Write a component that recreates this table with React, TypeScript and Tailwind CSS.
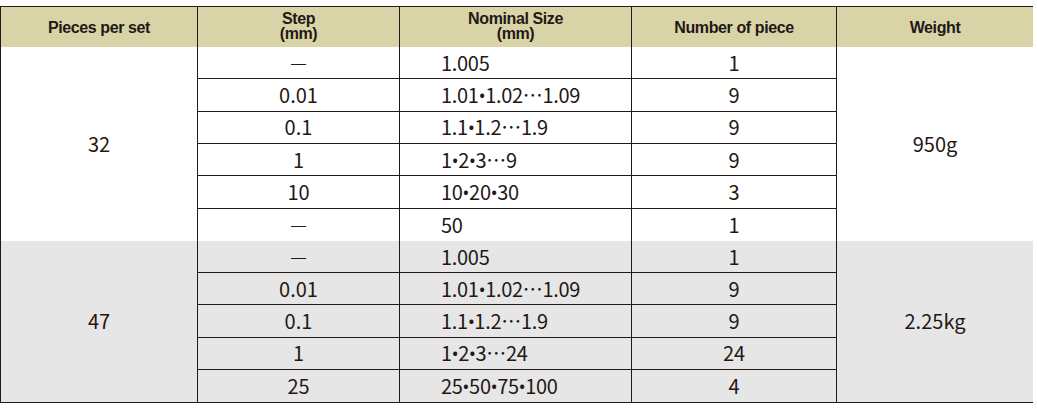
import React from 'react';

type Row = { step: string; size: string; count: string };

const groups: { pieces: string; weight: string; bg: string; span: string; rows: Row[] }[] = [
  {
    pieces: '32',
    weight: '950g',
    bg: 'bg-white',
    span: 'row-span-6',
    rows: [
      { step: '—', size: '1.005', count: '1' },
      { step: '0.01', size: '1.01•1.02…1.09', count: '9' },
      { step: '0.1', size: '1.1•1.2…1.9', count: '9' },
      { step: '1', size: '1•2•3…9', count: '9' },
      { step: '10', size: '10•20•30', count: '3' },
      { step: '—', size: '50', count: '1' },
    ],
  },
  {
    pieces: '47',
    weight: '2.25kg',
    bg: 'bg-[#e6e6e6]',
    span: 'row-span-5',
    rows: [
      { step: '—', size: '1.005', count: '1' },
      { step: '0.01', size: '1.01•1.02…1.09', count: '9' },
      { step: '0.1', size: '1.1•1.2…1.9', count: '9' },
      { step: '1', size: '1•2•3…24', count: '24' },
      { step: '25', size: '25•50•75•100', count: '4' },
    ],
  },
];

const headCell =
  "flex items-center justify-center text-center bg-[#d9d4a7] font-['Liberation_Sans',Arial,sans-serif] font-bold text-[16px] leading-[15px] tracking-[-0.4px]";

// bullets drawn narrow with Noto Sans, the rest in the CJK gothic
function Size({ text }: { text: string }) {
  const parts = text.split('•');
  return (
    <>
      {parts.map((p, i) => (
        <React.Fragment key={i}>
          {i > 0 && <span className="font-['Noto_Sans',sans-serif] text-[18px]">•</span>}
          {p}
        </React.Fragment>
      ))}
    </>
  );
}

function Step({ text }: { text: string }) {
  if (text === '—') return <span className="font-['Liberation_Sans',Arial,sans-serif] text-[15px]">—</span>;
  return <>{text}</>;
}

export default function App() {
  return (
    <div className="w-[1037px] h-[412px] bg-white pt-[6px] text-[#231815]">
      <div className="grid w-[1033px] grid-cols-[198px_202px_232px_205px_196px] grid-rows-[40px_repeat(6,32.33px)_repeat(5,32.2px)] border-t border-b border-[#231815] box-content font-['Noto_Sans_CJK_JP','Noto_Sans',sans-serif]">
        <div className={`${headCell} border-l border-r border-[#231815]`}>Pieces per set</div>
        <div className={`${headCell} pb-[3px] border-r border-[#231815]`}>
          Step<br />(mm)
        </div>
        <div className={`${headCell} pb-[3px] border-r border-[#231815]`}>
          Nominal Size<br />(mm)
        </div>
        <div className={`${headCell} border-r border-[#231815]`}>Number of piece</div>
        <div className={headCell}>Weight</div>

        {groups.map((g) => (
          <React.Fragment key={g.pieces}>
            <div className={`${g.bg} ${g.span} col-start-1 flex items-center justify-center border-l border-r border-[#231815] text-[20px]`}>
              {g.pieces}
            </div>
            {g.rows.map((r, i) => {
              const line = i === g.rows.length - 1 ? '' : 'border-b';
              return (
                <React.Fragment key={i}>
                  <div className={`${g.bg} ${line} col-start-2 flex items-center justify-center border-r border-[#231815] text-[20px] leading-none`}>
                    <Step text={r.step} />
                  </div>
                  <div className={`${g.bg} ${line} flex items-center pl-[41px] border-r border-[#231815] text-[20px] leading-none tracking-[-0.3px]`}>
                    <Size text={r.size} />
                  </div>
                  <div className={`${g.bg} ${line} flex items-center justify-center border-r border-[#231815] text-[20px] leading-none`}>
                    {r.count}
                  </div>
                  {i === 0 && (
                    <div className={`${g.bg} ${g.span} col-start-5 flex items-center justify-center text-[20px]`}>
                      {g.weight}
                    </div>
                  )}
                </React.Fragment>
              );
            })}
          </React.Fragment>
        ))}
      </div>
    </div>
  );
}
